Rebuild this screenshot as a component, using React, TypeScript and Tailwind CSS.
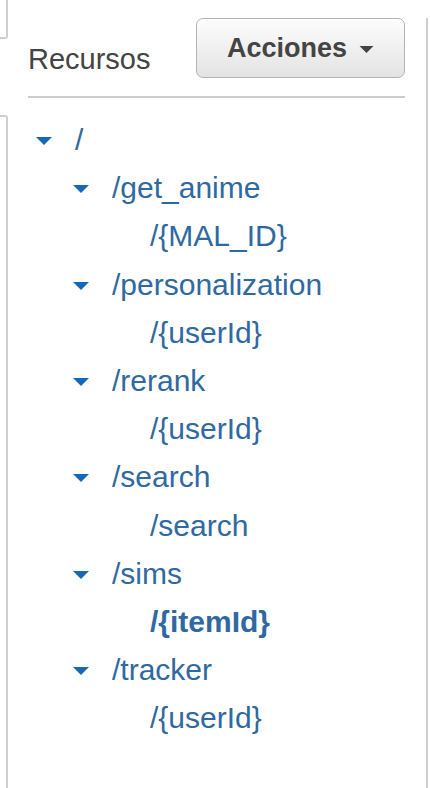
import React from 'react';

interface Node {
  path: string;
  level: number;
  open?: boolean;
  bold?: boolean;
}

const resources: Node[] = [
  { path: '/', level: 0, open: true },
  { path: '/get_anime', level: 1, open: true },
  { path: '/{MAL_ID}', level: 2 },
  { path: '/personalization', level: 1, open: true },
  { path: '/{userId}', level: 2 },
  { path: '/rerank', level: 1, open: true },
  { path: '/{userId}', level: 2 },
  { path: '/search', level: 1, open: true },
  { path: '/search', level: 2 },
  { path: '/sims', level: 1, open: true },
  { path: '/{itemId}', level: 2, bold: true },
  { path: '/tracker', level: 1, open: true },
  { path: '/{userId}', level: 2 },
];

const indent = ['pl-[8px]', 'pl-[45px]', 'pl-[83px]'];

const Caret = ({ className }: { className?: string }) => (
  <svg width="16" height="8" viewBox="0 0 16 8" className={className}>
    <polygon points="0,0 16,0 8,8" fill="currentColor" />
  </svg>
);

const App: React.FC = () => {
  return (
    <div
      className="w-[430px] h-[788px] bg-white flex overflow-hidden"
      style={{ fontFamily: '"Liberation Sans", Arial, sans-serif' }}
    >
      {/* edge of the neighbouring panel */}
      <div className="w-[8px] flex flex-col">
        <div className="h-[39px] border-r-2 border-b-2 border-[#cfcfcf] rounded-br-[3px]" />
        <div className="h-[76px]" />
        <div className="flex-1 border-r-2 border-t-2 border-[#cfcfcf] rounded-tr-[3px]" />
      </div>

      <main className="flex-1 pl-[20px] pr-[21px]">
        <div className="h-[98px] flex justify-between items-start border-b-2 border-[#cccccc]">
          <h2 className="mt-[45px] text-[29px] leading-none text-[#444444]">Recursos</h2>
          <button className="mt-[18px] w-[209px] h-[60px] rounded-[7px] border border-[#b3b3b3] bg-gradient-to-b from-[#fdfdfd] to-[#e3e3e3] flex items-center justify-center gap-[12px] text-[#444444] shadow-[inset_0_1px_0_#ffffff]">
            <span className="text-[27px] font-bold leading-none">Acciones</span>
            <Caret className="text-[#444444] w-[15px] h-[7px] mt-[2px]" />
          </button>
        </div>

        <ul className="pt-[18px]">
          {resources.map((r, i) => (
            <li key={i} className={`h-[48.2px] flex items-center ${indent[r.level]}`}>
              <span className="w-[39px] flex-none">
                {r.open && <Caret className="text-[#1668b6] mt-[2px]" />}
              </span>
              <span
                className={`text-[30px] leading-none text-[#2f69a1] whitespace-nowrap ${r.bold ? 'font-bold' : ''}`}
              >
                {r.path}
              </span>
            </li>
          ))}
        </ul>
      </main>

      <div className="w-[2px] mt-[18px] bg-[#cfcfcf] mr-[2px]" />
    </div>
  );
};

export default App;
